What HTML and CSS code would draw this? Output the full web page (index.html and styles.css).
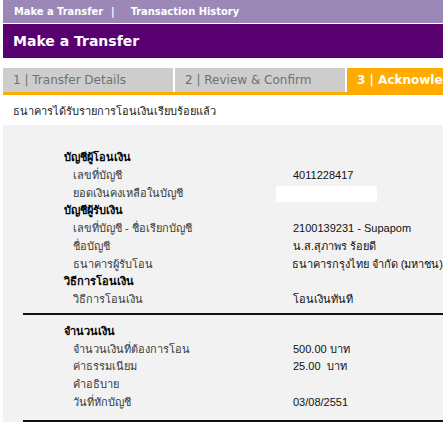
FILE: index.html
```html
<!DOCTYPE html>
<html>
<head>
<meta charset="utf-8">
<link rel="stylesheet" href="styles.css">
</head>
<body>
<div class="page">
  <div class="topnav"><span>Make a Transfer</span><span class="sep">|</span><span>Transaction History</span></div>
  <div class="titlebar">Make a Transfer</div>
  <div class="tabs">
    <div class="tab">1 | Transfer Details</div>
    <div class="tab">2 | Review &amp; Confirm</div>
    <div class="tab active">3 | Acknowledgement</div>
  </div>
  <div class="msg">ธนาคารได้รับรายการโอนเงินเรียบร้อยแล้ว</div>
  <div class="panel">
    <div class="section">
      <div class="row head">บัญชีผู้โอนเงิน</div>
      <div class="row"><span class="label">เลขที่บัญชี</span><span class="value">4011228417</span></div>
      <div class="row"><span class="label">ยอดเงินคงเหลือในบัญชี</span><span class="value"><span class="redact"></span></span></div>
      <div class="row head">บัญชีผู้รับเงิน</div>
      <div class="row"><span class="label">เลขที่บัญชี - ชื่อเรียกบัญชี</span><span class="value">2100139231 - Supapom</span></div>
      <div class="row"><span class="label">ชื่อบัญชี</span><span class="value">น.ส.สุภาพร ร้อยดี</span></div>
      <div class="row"><span class="label">ธนาคารผู้รับโอน</span><span class="value">ธนาคารกรุงไทย จำกัด (มหาชน)</span></div>
      <div class="row head">วิธีการโอนเงิน</div>
      <div class="row"><span class="label">วิธีการโอนเงิน</span><span class="value">โอนเงินทันที</span></div>
    </div>
    <div class="rule first"></div>
    <div class="section second">
      <div class="row head">จำนวนเงิน</div>
      <div class="row"><span class="label">จำนวนเงินที่ต้องการโอน</span><span class="value">500.00 บาท</span></div>
      <div class="row"><span class="label">ค่าธรรมเนียม</span><span class="value">25.00&nbsp; บาท</span></div>
      <div class="row"><span class="label">คำอธิบาย</span><span class="value"></span></div>
      <div class="row"><span class="label">วันที่หักบัญชี</span><span class="value">03/08/2551</span></div>
    </div>
    <div class="rule last"></div>
  </div>
</div>
</body>
</html>
```
FILE: styles.css
```css
html, body {
  margin: 0;
  padding: 0;
  background: #ffffff;
  overflow: hidden;
}
.page {
  padding-left: 3px;
  font-family: "Liberation Sans", "DejaVu Sans", sans-serif;
  overflow: hidden;
}
.topnav {
  height: 23px;
  background: #9c88b7;
  color: #ffffff;
  font-family: "DejaVu Sans Condensed", "DejaVu Sans", sans-serif;
  font-weight: bold;
  font-size: 11px;
  display: flex;
  align-items: center;
  padding-left: 11px;
  gap: 8px;
}
.topnav .sep { margin-right: 8px; }
.titlebar {
  margin-top: 1px;
  height: 34px;
  background: #580070;
  color: #ffffff;
  font-family: "DejaVu Sans", sans-serif;
  font-weight: bold;
  font-size: 14px;
  display: flex;
  align-items: center;
  padding-left: 10px;
}
.tabs {
  margin-top: 10px;
  display: flex;
  gap: 2px;
  border-bottom: 3px solid #ffab00;
  overflow: hidden;
}
.tab {
  flex: 0 0 170px;
  height: 24px;
  background: #cdcdcd;
  color: #707070;
  font-family: "DejaVu Sans", sans-serif;
  font-size: 12px;
  display: flex;
  align-items: center;
  padding-left: 10px;
  box-sizing: border-box;
  white-space: nowrap;
  overflow: hidden;
}
.tab.active {
  background: #ffab00;
  color: #ffffff;
  font-weight: bold;
  flex: 1 0 96px;
}
.msg {
  font-size: 11px;
  color: #1a1a1a;
  padding: 7px 0 0 10px;
  height: 23px;
}
.panel {
  background: #f2f2f2;
  padding-top: 24px;
}
.section { padding-left: 61px; }
.section.second { padding-top: 8px; }
.row {
  height: 17.75px;
  line-height: 17.75px;
  font-size: 11px;
  display: flex;
  white-space: nowrap;
}
.row.head {
  font-weight: bold;
  color: #000;
}
.label {
  width: 220px;
  padding-left: 9px;
  color: #3a3a3a;
}
.value {
  color: #111;
  position: relative;
}
.redact {
  position: absolute;
  left: -17px;
  top: 1px;
  width: 101px;
  height: 16px;
  background: #ffffff;
}
.rule {
  margin-left: 20px;
  height: 2px;
  background: #111;
}
.rule.first { margin-top: 4px; }
.rule.last { margin-top: 8px; }
```
